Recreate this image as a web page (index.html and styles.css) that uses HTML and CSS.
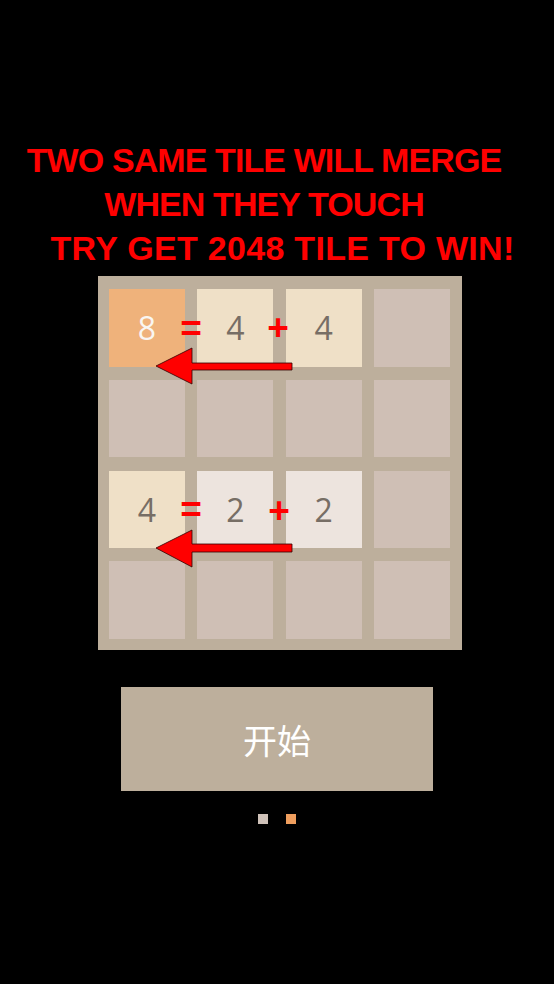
FILE: index.html
```html
<!DOCTYPE html>
<html lang="zh">
<head>
  <meta charset="UTF-8">
  <title>2048</title>
  <meta name="viewport" content="width=device-width, initial-scale=1.0">
  <link rel="stylesheet" href="styles.css">
</head>
<body>

  <div class="guide">
    <p class="tip">
      <span class="tip-line line-a">TWO SAME TILE WILL MERGE</span>
      <span class="tip-line line-a">WHEN THEY TOUCH</span>
      <span class="tip-line line-c">TRY GET 2048 TILE TO WIN!</span>
    </p>

    <div class="board">
      <div class="grid">
        <div class="tile t8">8</div>
        <div class="tile t4">4</div>
        <div class="tile t4">4</div>
        <div class="tile"></div>

        <div class="tile"></div>
        <div class="tile"></div>
        <div class="tile"></div>
        <div class="tile"></div>

        <div class="tile t4">4</div>
        <div class="tile t2">2</div>
        <div class="tile t2">2</div>
        <div class="tile"></div>

        <div class="tile"></div>
        <div class="tile"></div>
        <div class="tile"></div>
        <div class="tile"></div>
      </div>

      <!-- signs and arrows drawn over the sample rows -->
      <span class="sign eq-1">=</span>
      <span class="sign plus-1">+</span>
      <span class="sign eq-2">=</span>
      <span class="sign plus-2">+</span>

      <svg class="arrows" width="364" height="374" viewBox="0 0 364 374">
        <g fill="#ff0000" stroke="#300" stroke-width="0.8" stroke-linejoin="miter">
          <path d="M58 90 L94 72 L94 87 L194 87 L194 94 L94 94 L94 108 Z"/>
          <path d="M58 272 L94 254 L94 268 L194 268 L194 276 L94 276 L94 291 Z"/>
        </g>
      </svg>
    </div>

    <button class="start-btn">开始</button>

    <div class="pager">
      <span class="dot"></span>
      <span class="dot active"></span>
    </div>
  </div>

</body>
</html>
```

FILE: styles.css
```css
body {
  margin: 0;
  background-color: #000;
  font-family: 'Open Sans', 'Noto Sans CJK SC', sans-serif;
}

.guide {
  width: 554px;
  height: 984px;
  padding-top: 138px;
  box-sizing: border-box;
}

.tip {
  margin: 0;
  font-family: 'Liberation Sans', Arial, sans-serif;
  font-weight: bold;
  font-size: 34px;
  letter-spacing: -0.9px;
  line-height: 44px;
  color: #ff0000;
  text-align: center;
}

.tip-line {
  display: block;
  white-space: nowrap;
}

.line-a {
  padding-right: 26px;
}

.line-c {
  padding-left: 11px;
  letter-spacing: 0.3px;
}

.board {
  position: relative;
  width: 364px;
  height: 374px;
  margin: 6px 0 0 98px;
  padding: 13px 12px 11px 11px;
  box-sizing: border-box;
  background-color: #bdaf9c;
}

.grid {
  display: grid;
  grid-template-columns: repeat(4, 76px);
  grid-template-rows: repeat(4, 77.5px);
  column-gap: 12.3px;
  row-gap: 13.3px;
}

.tile {
  background-color: #cfbfb5;
  display: flex;
  align-items: center;
  justify-content: center;
  font-size: 32px;
  color: #776e65;
}

.t2 {
  background-color: #ede4de;
}

.t4 {
  background-color: #efe0c7;
}

.t8 {
  background-color: #efb27b;
  color: #f9f6f2;
}

.sign {
  position: absolute;
  font-family: 'Liberation Sans', Arial, sans-serif;
  font-weight: bold;
  font-size: 37px;
  line-height: 37px;
  color: #ff0000;
  transform: translate(-50%, -50%);
}

.eq-1 { left: 93px; top: 52px; }
.plus-1 { left: 180px; top: 51px; }
.eq-2 { left: 93px; top: 233px; }
.plus-2 { left: 181px; top: 234px; }

.arrows {
  position: absolute;
  left: 0;
  top: 0;
}

.start-btn {
  display: block;
  width: 312px;
  height: 104px;
  margin: 37px 0 0 121px;
  border: none;
  background-color: #bdaf9c;
  color: #fff;
  font-family: 'Noto Sans CJK SC', sans-serif;
  font-size: 34px;
  padding: 0;
}

.pager {
  display: flex;
  justify-content: center;
  gap: 18px;
  margin-top: 23px;
}

.dot {
  width: 10px;
  height: 10px;
  background-color: #cfc2b9;
}

.dot.active {
  background-color: #ef9e5e;
}
```
